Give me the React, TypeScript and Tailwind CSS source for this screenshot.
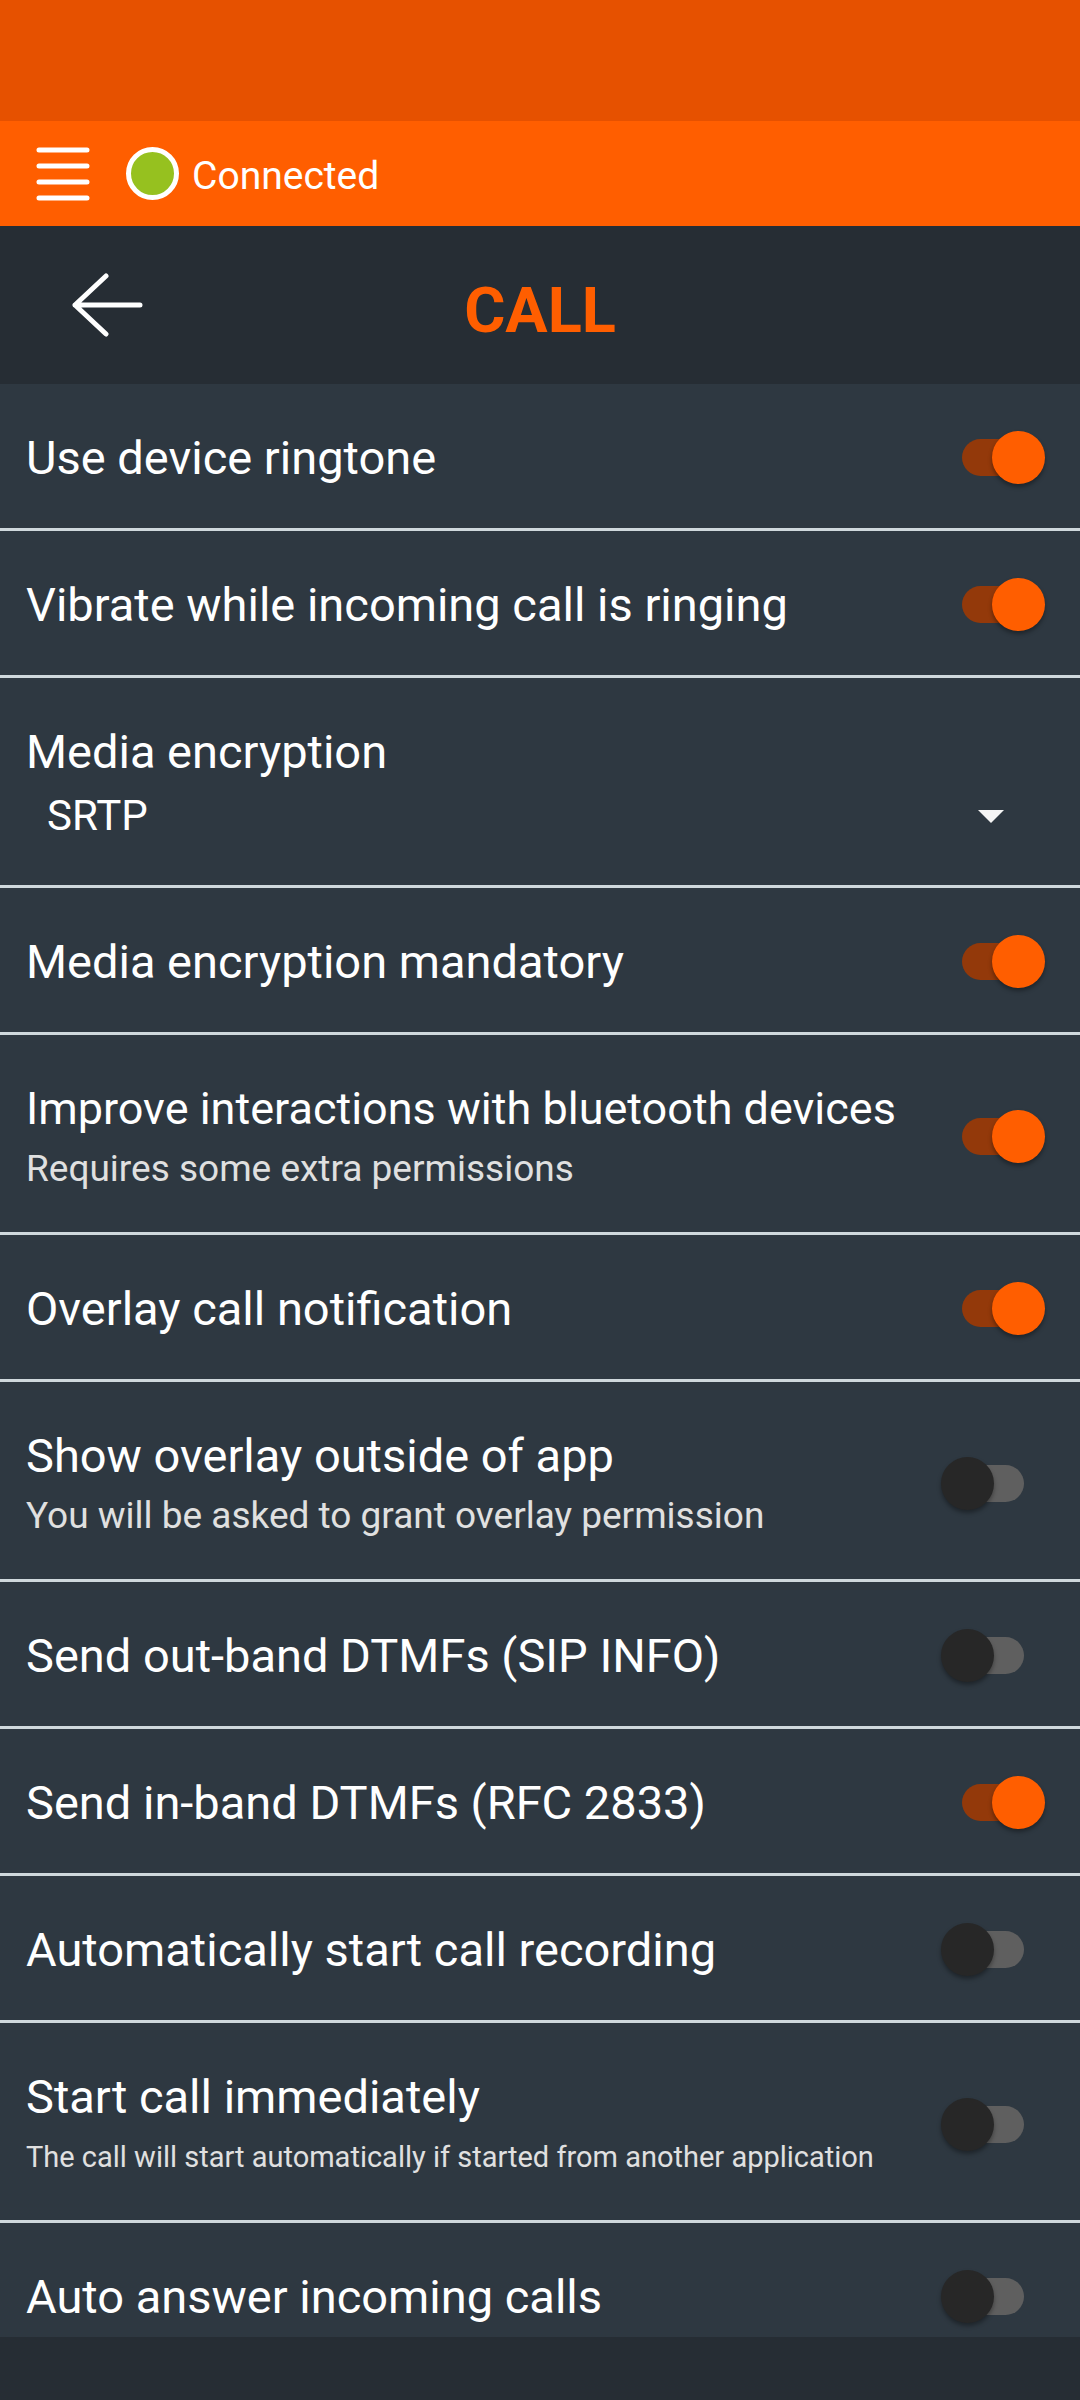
import React from 'react';

type Row = {
  id: string;
  label: string;
  note?: string;
  compactLabel?: boolean;
  compactNote?: boolean;
  on?: boolean;
  select?: boolean;
};

const rows: Row[] = [
  { id: 'ringtone', label: 'Use device ringtone', on: true },
  { id: 'vibrate', label: 'Vibrate while incoming call is ringing', on: true },
  { id: 'encryption', label: 'Media encryption', select: true },
  { id: 'mandatory', label: 'Media encryption mandatory', on: true },
  { id: 'bluetooth', label: 'Improve interactions with bluetooth devices', note: 'Requires some extra permissions', compactLabel: true, on: true },
  { id: 'overlay', label: 'Overlay call notification', on: true },
  { id: 'outside', label: 'Show overlay outside of app', note: 'You will be asked to grant overlay permission' },
  { id: 'sipinfo', label: 'Send out-band DTMFs (SIP INFO)' },
  { id: 'rfc2833', label: 'Send in-band DTMFs (RFC 2833)', on: true },
  { id: 'recording', label: 'Automatically start call recording' },
  { id: 'immediate', label: 'Start call immediately', note: 'The call will start automatically if started from another application', compactNote: true },
  { id: 'auto', label: 'Auto answer incoming calls' },
];

function Toggle({ id, on }: { id: string; on?: boolean }) {
  return (
    <span className="relative flex h-[53px] w-[104px] shrink-0 items-center">
      <input
        id={id}
        type="checkbox"
        role="switch"
        defaultChecked={on}
        className="peer ml-[21px] h-[37px] w-[62px] appearance-none rounded-full bg-[#5f5f5f] checked:bg-[#93390a]"
      />
      <span className="pointer-events-none absolute left-0 top-0 size-[53px] rounded-full bg-[#272727] shadow-[0_3px_4px_rgba(0,0,0,0.35)] peer-checked:left-[51px] peer-checked:bg-[#ff5e00]" />
    </span>
  );
}

function SettingRow({ row }: { row: Row }) {
  if (row.select) {
    return (
      <div className="border-b-3 border-[#cfd8dc] px-[26px] pb-[35px] pt-11">
        <label htmlFor={row.id} className="block text-[47px] leading-[60px] text-white">{row.label}</label>
        <div className="relative flex h-[68px] items-center">
          <select id={row.id} defaultValue="SRTP" className="w-full appearance-none bg-transparent pl-[21px] text-[42px] leading-[54px] text-white">
            <option>None</option>
            <option>SRTP</option>
          </select>
          <svg className="pointer-events-none absolute right-[50px] h-[13px] w-[26px]" viewBox="0 0 26 13" fill="#f5f5f5">
            <path d="M0 0h26L13 13z" />
          </svg>
        </div>
      </div>
    );
  }
  return (
    <div className={`flex items-center justify-between border-b-3 border-[#cfd8dc] pl-[26px] pr-[35px] pt-[42px] last:border-b-0 ${row.note ? 'pb-[37px]' : 'pb-10'}`}>
      <div className="min-w-0 whitespace-nowrap pt-0.5">
        <label htmlFor={row.id} className={`block leading-[60px] text-white ${row.compactLabel ? 'text-[45px]' : 'text-[47px]'}`}>
          {row.label}
        </label>
        {row.note && (
          <p className={`mt-1 leading-[52px] text-[#e0e0e0] ${row.compactNote ? 'text-[29px]' : 'text-[37px]'}`}>{row.note}</p>
        )}
      </div>
      <Toggle id={row.id} on={row.on} />
    </div>
  );
}

export default function App() {
  return (
    <div className="flex h-screen flex-col overflow-hidden bg-[#262d34] font-['Roboto',sans-serif]">
      <div className="h-[121px] shrink-0 bg-[#e65100]" />
      <header className="flex h-[105px] shrink-0 items-center bg-[#ff5e00] pl-9">
        <button aria-label="Menu">
          <svg className="size-[54px]" viewBox="0 0 54 54" stroke="#fff" strokeWidth="5" strokeLinecap="round">
            <path d="M3 3h48M3 19h48M3 35h48M3 51h48" />
          </svg>
        </button>
        <span className="ml-9 size-[53px] rounded-full border-5 border-white bg-[#96c11f]" />
        <span className="ml-[13px] pt-1 text-[39px] leading-[50px] text-white">Connected</span>
      </header>
      <div className="grid h-[158px] shrink-0 grid-cols-3 items-center">
        <button aria-label="Back" className="ml-[72px] justify-self-start">
          <svg className="h-[64px] w-[72px]" viewBox="0 0 72 64" fill="none" stroke="#fff" strokeWidth="5" strokeLinecap="round" strokeLinejoin="round">
            <path d="M34 3L3 32l31 29M3 32h65" />
          </svg>
        </button>
        <h1 className="pt-3 text-center text-[63px] font-bold text-[#ff5e00]">CALL</h1>
      </div>
      <main className="mb-[63px] min-h-0 flex-1 overflow-hidden bg-[#2e3841]">
        {rows.map((row) => <SettingRow key={row.id} row={row} />)}
      </main>
    </div>
  );
}
